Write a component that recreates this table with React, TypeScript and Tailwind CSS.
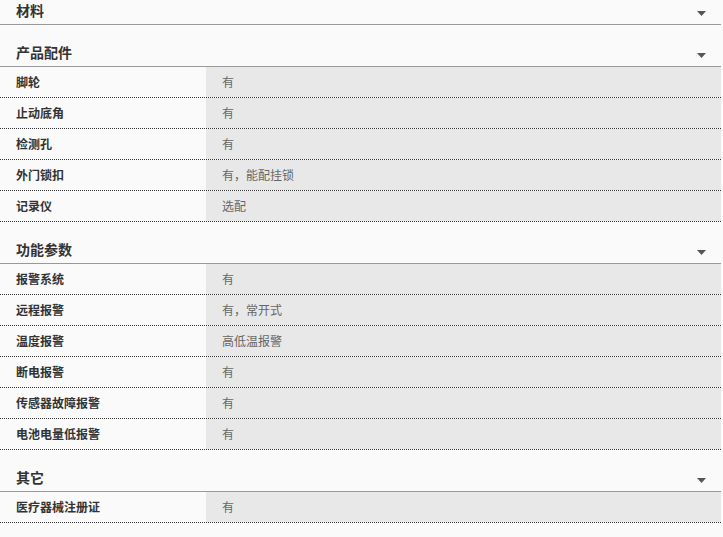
import React from "react";

type Section = { title: string; rows: [string, string][]; first?: boolean };

const sections: Section[] = [
  { title: "材料", rows: [], first: true },
  {
    title: "产品配件",
    rows: [
      ["脚轮", "有"],
      ["止动底角", "有"],
      ["检测孔", "有"],
      ["外门锁扣", "有，能配挂锁"],
      ["记录仪", "选配"],
    ],
  },
  {
    title: "功能参数",
    rows: [
      ["报警系统", "有"],
      ["远程报警", "有，常开式"],
      ["温度报警", "高低温报警"],
      ["断电报警", "有"],
      ["传感器故障报警", "有"],
      ["电池电量低报警", "有"],
    ],
  },
  { title: "其它", rows: [["医疗器械注册证", "有"]] },
];

function Arrow() {
  return (
    <svg width="9" height="5" viewBox="0 0 9 5" className="block">
      <polygon points="0,0 9,0 4.5,5" fill="#555555" />
    </svg>
  );
}

export default function App() {
  return (
    <div
      className="w-[723px] h-[537px] bg-[#fafafa] overflow-hidden"
      style={{ fontFamily: '"Noto Sans CJK SC", "Noto Sans", sans-serif' }}
    >
      <div className="w-[721px]">
        {sections.map((s) => (
          <div key={s.title}>
            <div
              className={`${s.first ? "h-[25px]" : "h-[42px]"} flex items-end justify-between border-b border-[#999999] pl-[16px] pr-[15px]`}
            >
              <span
                className={`text-[14px] leading-[18px] font-bold text-[#333333] ${s.first ? "pb-[5px]" : "pb-[5px]"}`}
              >
                {s.title}
              </span>
              <span className="pb-[8px]">
                <Arrow />
              </span>
            </div>
            {s.rows.map(([k, v]) => (
              <div
                key={k}
                className="h-[31px] flex border-b border-dotted border-[#333333]"
              >
                <div className="w-[206px] flex items-center pl-[16px] text-[12px] font-bold text-[#333333]">
                  {k}
                </div>
                <div className="flex-1 flex items-center bg-[#e8e8e8] pl-[16px] text-[12px] text-[#666666]">
                  {v}
                </div>
              </div>
            ))}
          </div>
        ))}
      </div>
    </div>
  );
}
